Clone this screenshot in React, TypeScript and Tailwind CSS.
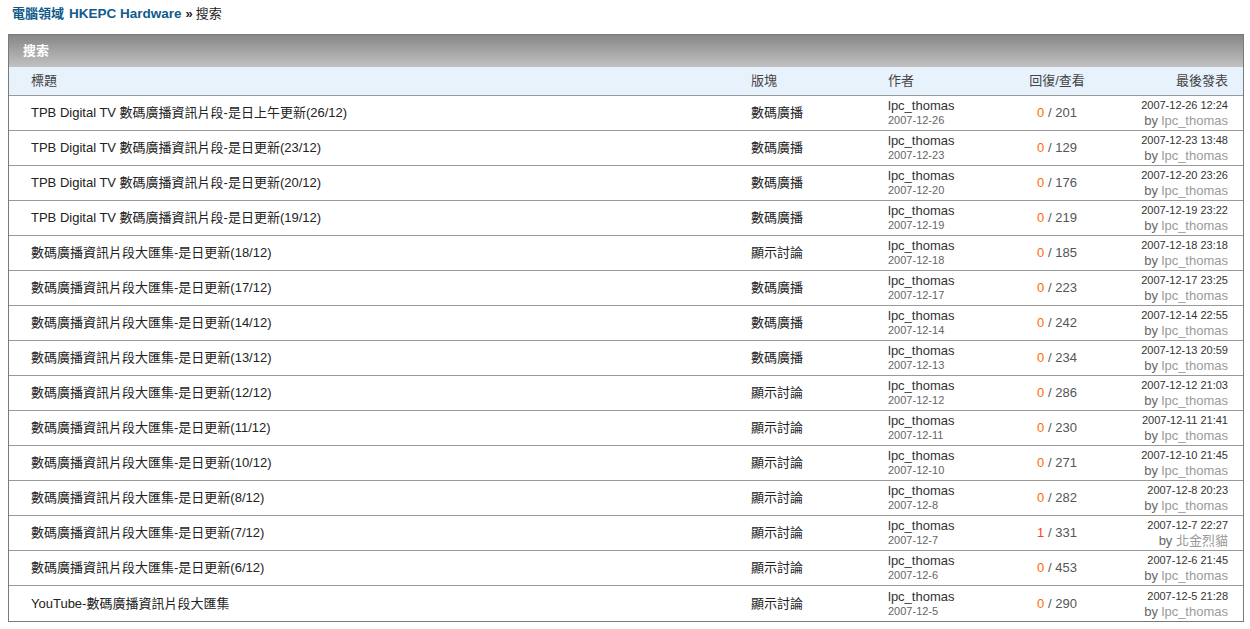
import React from "react";

type Row = {
  title: string;
  forum: string;
  date: string;
  replies: number;
  views: number;
  last: string;
  lastBy: string;
};

const rows: Row[] = [
  { title: "TPB Digital TV 數碼廣播資訊片段-是日上午更新(26/12)", forum: "數碼廣播", date: "2007-12-26", replies: 0, views: 201, last: "2007-12-26 12:24", lastBy: "lpc_thomas" },
  { title: "TPB Digital TV 數碼廣播資訊片段-是日更新(23/12)", forum: "數碼廣播", date: "2007-12-23", replies: 0, views: 129, last: "2007-12-23 13:48", lastBy: "lpc_thomas" },
  { title: "TPB Digital TV 數碼廣播資訊片段-是日更新(20/12)", forum: "數碼廣播", date: "2007-12-20", replies: 0, views: 176, last: "2007-12-20 23:26", lastBy: "lpc_thomas" },
  { title: "TPB Digital TV 數碼廣播資訊片段-是日更新(19/12)", forum: "數碼廣播", date: "2007-12-19", replies: 0, views: 219, last: "2007-12-19 23:22", lastBy: "lpc_thomas" },
  { title: "數碼廣播資訊片段大匯集-是日更新(18/12)", forum: "顯示討論", date: "2007-12-18", replies: 0, views: 185, last: "2007-12-18 23:18", lastBy: "lpc_thomas" },
  { title: "數碼廣播資訊片段大匯集-是日更新(17/12)", forum: "數碼廣播", date: "2007-12-17", replies: 0, views: 223, last: "2007-12-17 23:25", lastBy: "lpc_thomas" },
  { title: "數碼廣播資訊片段大匯集-是日更新(14/12)", forum: "數碼廣播", date: "2007-12-14", replies: 0, views: 242, last: "2007-12-14 22:55", lastBy: "lpc_thomas" },
  { title: "數碼廣播資訊片段大匯集-是日更新(13/12)", forum: "數碼廣播", date: "2007-12-13", replies: 0, views: 234, last: "2007-12-13 20:59", lastBy: "lpc_thomas" },
  { title: "數碼廣播資訊片段大匯集-是日更新(12/12)", forum: "顯示討論", date: "2007-12-12", replies: 0, views: 286, last: "2007-12-12 21:03", lastBy: "lpc_thomas" },
  { title: "數碼廣播資訊片段大匯集-是日更新(11/12)", forum: "顯示討論", date: "2007-12-11", replies: 0, views: 230, last: "2007-12-11 21:41", lastBy: "lpc_thomas" },
  { title: "數碼廣播資訊片段大匯集-是日更新(10/12)", forum: "顯示討論", date: "2007-12-10", replies: 0, views: 271, last: "2007-12-10 21:45", lastBy: "lpc_thomas" },
  { title: "數碼廣播資訊片段大匯集-是日更新(8/12)", forum: "顯示討論", date: "2007-12-8", replies: 0, views: 282, last: "2007-12-8 20:23", lastBy: "lpc_thomas" },
  { title: "數碼廣播資訊片段大匯集-是日更新(7/12)", forum: "顯示討論", date: "2007-12-7", replies: 1, views: 331, last: "2007-12-7 22:27", lastBy: "北金烈貓" },
  { title: "數碼廣播資訊片段大匯集-是日更新(6/12)", forum: "顯示討論", date: "2007-12-6", replies: 0, views: 453, last: "2007-12-6 21:45", lastBy: "lpc_thomas" },
  { title: "YouTube-數碼廣播資訊片段大匯集", forum: "顯示討論", date: "2007-12-5", replies: 0, views: 290, last: "2007-12-5 21:28", lastBy: "lpc_thomas" },
];

const font = { fontFamily: '"Liberation Sans", Arial, "Noto Sans CJK TC", sans-serif' };
const cols = "grid grid-cols-[742px_137px_112px_114px_1fr]";

export default function App() {
  return (
    <div className="h-[629px] w-[1250px] bg-white text-[13px] text-[#222]" style={font}>
      {/* breadcrumb */}
      <div className="flex h-[34px] items-start pl-[12px] pt-[5px] text-[13px] leading-[18px]">
        <span className="font-bold text-[#0f5b8c]">電腦領域</span>
        <span className="ml-[5px] text-[13.5px] font-bold text-[#0f5b8c]">HKEPC Hardware</span>
        <span className="ml-[4px] font-bold text-[#222]">»</span>
        <span className="ml-[3px] text-[#222]">搜索</span>
      </div>

      <div className="ml-[8px] w-[1236px] border border-[#7a7a7a]">
        <div className="flex h-[32px] items-center bg-gradient-to-b from-[#878787] to-[#c2c2c2] pl-[14px] text-[13px] font-bold text-white">
          搜索
        </div>

        <div className={`${cols} h-[29px] items-center border-b border-[#999] bg-[#e8f2fc] text-[13px] text-[#444]`}>
          <div className="pl-[22px]">標題</div>
          <div>版塊</div>
          <div>作者</div>
          <div className="text-center">回復/查看</div>
          <div className="pr-[15px] text-right">最後發表</div>
        </div>

        {rows.map((r, i) => (
          <div
            key={i}
            className={`${cols} h-[35px] items-center ${i < rows.length - 1 ? "border-b border-[#999]" : ""}`}
          >
            <div className="pl-[22px] text-[13px] text-[#222]">{r.title}</div>
            <div className="text-[13px] text-[#222]">{r.forum}</div>
            <div className="flex flex-col leading-[15px]">
              <span className="text-[13px] text-[#333]">lpc_thomas</span>
              <span className="text-[11px] text-[#666]">{r.date}</span>
            </div>
            <div className="text-center text-[13px] text-[#555]">
              <span className={r.replies > 0 ? "text-[#ff4020]" : "text-[#ff6a00]"}>{r.replies}</span> / {r.views}
            </div>
            <div className="flex flex-col items-end pr-[15px] leading-[15px]">
              <span className="text-[11px] text-[#333]">{r.last}</span>
              <span className="text-[13px] text-[#666]">
                by <span className="text-[#9a9a9a]">{r.lastBy}</span>
              </span>
            </div>
          </div>
        ))}
      </div>
    </div>
  );
}
